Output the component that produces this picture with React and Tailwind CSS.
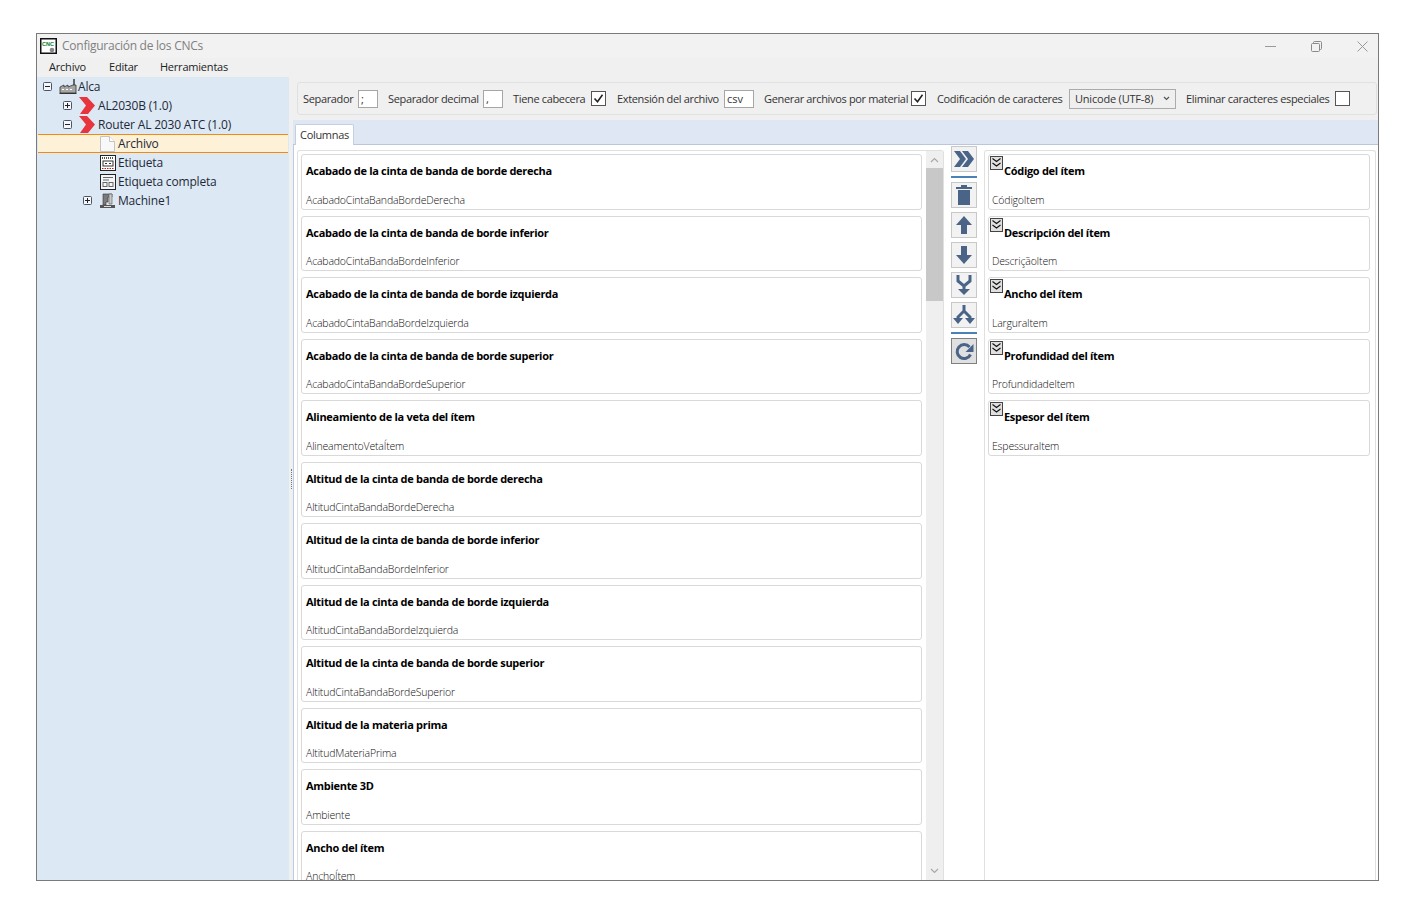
const font = { fontFamily: '"Open Sans", "Noto Sans", sans-serif' };

const columns = [
  ["Acabado de la cinta de banda de borde derecha", "AcabadoCintaBandaBordeDerecha"],
  ["Acabado de la cinta de banda de borde inferior", "AcabadoCintaBandaBordeInferior"],
  ["Acabado de la cinta de banda de borde izquierda", "AcabadoCintaBandaBordeIzquierda"],
  ["Acabado de la cinta de banda de borde superior", "AcabadoCintaBandaBordeSuperior"],
  ["Alineamiento de la veta del ítem", "AlineamentoVetaÍtem"],
  ["Altitud de la cinta de banda de borde derecha", "AltitudCintaBandaBordeDerecha"],
  ["Altitud de la cinta de banda de borde inferior", "AltitudCintaBandaBordeInferior"],
  ["Altitud de la cinta de banda de borde izquierda", "AltitudCintaBandaBordeIzquierda"],
  ["Altitud de la cinta de banda de borde superior", "AltitudCintaBandaBordeSuperior"],
  ["Altitud de la materia prima", "AltitudMateriaPrima"],
  ["Ambiente 3D", "Ambiente"],
  ["Ancho del ítem", "AnchoÍtem"],
];

const selected = [
  ["Código del ítem", "CódigoItem"],
  ["Descripción del ítem", "DescriçãoItem"],
  ["Ancho del ítem", "LarguraItem"],
  ["Profundidad del ítem", "ProfundidadeItem"],
  ["Espesor del ítem", "EspessuraItem"],
];

const ExpandBox = ({ open }) => (
  <svg width="9" height="9" viewBox="0 0 9 9" className="shrink-0">
    <rect x="0.5" y="0.5" width="8" height="8" rx="1" fill="#f4f7fb" stroke="#4a5568" />
    <path d={open ? "M2 4.5h5" : "M2 4.5h5M4.5 2v5"} stroke="#222" />
  </svg>
);

const Factory = () => (
  <svg width="18" height="16" viewBox="0 0 18 16">
    <path d="M14 0h2v8h-2z" fill="#666" />
    <path d="M1 14V8l4-2v2l4-2v2l5-2 3 0v8z" fill="#a6a6a6" stroke="#333" strokeWidth="0.8" />
    <path d="M3 10.5h2M7 10.5h2M11 10.5h2" stroke="#fff" />
    <path d="M0.5 14.5h17" stroke="#333" />
  </svg>
);

const RedChevron = () => (
  <svg width="16" height="17" viewBox="0 0 16 17">
    <path d="M0 0h8l8 8.5L9 17H1l6-8.5z" fill="#e8343c" />
  </svg>
);

const DocIcon = () => (
  <svg width="15" height="16" viewBox="0 0 15 16">
    <path d="M0.5 0.5h9l5 5v10h-14z" fill="#f8f8f8" stroke="#c4c4c4" />
    <path d="M9.5 0.5v5h5" fill="#fff" stroke="#c4c4c4" />
  </svg>
);

const LabelIcon = () => (
  <svg width="16" height="16" viewBox="0 0 16 16">
    <rect x="0.5" y="0.5" width="15" height="15" fill="#fff" stroke="#222" />
    <path d="M2 3h12" stroke="#555" strokeWidth="2" strokeDasharray="1 1" />
    <rect x="3" y="6" width="10" height="5" fill="#fff" stroke="#333" />
    <path d="M5 8.5h2M9 8.5h2" stroke="#333" />
    <path d="M2 13.5h12" stroke="#d01818" strokeDasharray="1.5 1" />
  </svg>
);

const FullLabelIcon = () => (
  <svg width="16" height="16" viewBox="0 0 16 16">
    <rect x="0.5" y="0.5" width="15" height="15" fill="#f4f6f8" stroke="#222" />
    <path d="M3 3.5h10M3 6h6" stroke="#666" />
    <rect x="3" y="8.5" width="4" height="4" fill="none" stroke="#666" />
    <rect x="9" y="8.5" width="4" height="4" fill="none" stroke="#666" />
  </svg>
);

const MachineIcon = () => (
  <svg width="15" height="16" viewBox="0 0 15 16">
    <path d="M3 1h9v3H8v5H6v3H3z" fill="#7b7b7b" stroke="#333" strokeWidth="0.6" />
    <path d="M9 1h3v10H9z" fill="#c9c9c9" stroke="#555" strokeWidth="0.6" />
    <path d="M0 12h15v3H0z" fill="#555" />
    <path d="M4 13.5h7" stroke="#ddd" />
  </svg>
);

const TreeRow = ({ indent, box, icon, label, active }) => (
  <div
    className={`flex h-[19px] items-center ${indent} ${
      active ? "border-y border-[#f08a10] bg-[#fdf1d8]" : ""
    }`}
  >
    {box}
    {icon}
    <span className="text-[12px] leading-none tracking-[-0.18px] text-[#1e2a38]">{label}</span>
  </div>
);

const Tree = () => (
  <div className="w-[252px] shrink-0 bg-[#dde8f5]">
    <TreeRow
      indent="pl-[6px]"
      box={<ExpandBox open />}
      icon={<span className="ml-[7px] mr-[1px] flex"><Factory /></span>}
      label="Alca"
    />
    <TreeRow
      indent="pl-[26px]"
      box={<ExpandBox />}
      icon={<span className="ml-[7px] mr-[3px] flex"><RedChevron /></span>}
      label="AL2030B (1.0)"
    />
    <TreeRow
      indent="pl-[26px]"
      box={<ExpandBox open />}
      icon={<span className="ml-[7px] mr-[3px] flex"><RedChevron /></span>}
      label="Router AL 2030 ATC (1.0)"
    />
    <TreeRow
      indent="ml-px mr-px pl-[62px]"
      icon={<span className="mr-[3px] flex"><DocIcon /></span>}
      label="Archivo"
      active
    />
    <TreeRow
      indent="pl-[63px]"
      icon={<span className="mr-[2px] flex"><LabelIcon /></span>}
      label="Etiqueta"
    />
    <TreeRow
      indent="pl-[63px]"
      icon={<span className="mr-[2px] flex"><FullLabelIcon /></span>}
      label="Etiqueta completa"
    />
    <TreeRow
      indent="pl-[46px]"
      box={<ExpandBox />}
      icon={<span className="ml-[8px] mr-[3px] flex"><MachineIcon /></span>}
      label="Machine1"
    />
  </div>
);

const Field = ({ value, width }) => (
  <span
    className={`ml-[5px] flex h-[18px] ${width} items-center border border-[#a6a6a6] bg-white pl-[2px] text-[11px] leading-none text-[#333]`}
  >
    {value}
  </span>
);

const Check = ({ checked }) => (
  <svg width="15" height="15" viewBox="0 0 15 15" className="ml-[5px] shrink-0">
    <rect x="0.5" y="0.5" width="14" height="14" fill="#fff" stroke="#555" />
    {checked && <path d="M3.5 7.5l3 3.2 5-7" fill="none" stroke="#222" strokeWidth="1.6" />}
  </svg>
);

const Label = ({ children, width, className = "" }) => (
  <span className={`${width} ${className} whitespace-nowrap text-[11px] leading-none tracking-[-0.34px] text-[#333]`}>
    {children}
  </span>
);

const Toolbar = () => (
  <div className="mt-[5px] mr-px ml-[4px] flex h-[33px] items-center rounded-[3px] border border-[#e0e0e0] bg-[#f0f0f0] pl-[5px]">
    <Label width="w-[50px]">Separador</Label>
    <Field value=";" width="w-[20px]" />
    <Label width="w-[90px]" className="ml-[10px]">Separador decimal</Label>
    <Field value="," width="w-[20px]" />
    <Label width="w-[73px]" className="ml-[10px]">Tiene cabecera</Label>
    <Check checked />
    <Label width="w-[102px]" className="ml-[11px]">Extensión del archivo</Label>
    <Field value="csv" width="w-[30px]" />
    <Label width="w-[142px]" className="ml-[10px]">Generar archivos por material</Label>
    <Check checked />
    <Label width="w-[127px]" className="ml-[11px]">Codificación de caracteres</Label>
    <div className="ml-[5px] flex h-[20px] w-[107px] items-center justify-between border border-[#ababab] bg-[#efefef] pl-[5px] pr-[5px]">
      <span className="whitespace-nowrap text-[11px] leading-none tracking-[-0.2px] text-[#333]">Unicode (UTF-8)</span>
      <svg width="7" height="5" viewBox="0 0 7 5"><path d="M1 1l2.5 2.5L6 1" fill="none" stroke="#555" strokeWidth="1.2" /></svg>
    </div>
    <Label width="w-[144px]" className="ml-[10px]">Eliminar caracteres especiales</Label>
    <Check />
  </div>
);

const CollapseBox = () => (
  <svg width="13" height="14" viewBox="0 0 13 14" className="mt-px ml-px shrink-0">
    <rect x="0.5" y="0.5" width="12" height="13" fill="#e0e0e0" stroke="#444" />
    <path d="M2.5 2.5l4 3 4-3M2.5 7l4 3 4-3" fill="none" stroke="#111" strokeWidth="1.1" />
  </svg>
);

const ColumnRow = ({ title, name, collapsible }) => (
  <div className="flex h-[55.5px] shrink-0 flex-col rounded-[3px] border border-[#d9d9d9] bg-white">
    {collapsible ? (
      <div className="flex">
        <CollapseBox />
        <span className="mt-[10px] ml-px text-[11px] leading-[12px] font-bold tracking-[-0.3px] text-black">{title}</span>
      </div>
    ) : (
      <span className="mt-[10px] ml-[4px] text-[11px] leading-[12px] font-bold tracking-[-0.3px] text-black">{title}</span>
    )}
    <span
      className={`mt-auto mb-[3px] text-[10.5px] leading-[12px] font-light tracking-[-0.18px] text-[#111] ${
        collapsible ? "ml-[3px]" : "ml-[4px]"
      }`}
    >
      {name}
    </span>
  </div>
);

const Scrollbar = () => (
  <div className="flex w-[17px] shrink-0 flex-col bg-[#efefef]">
    <div className="flex h-[17px] shrink-0 items-center justify-center">
      <svg width="9" height="6" viewBox="0 0 9 6"><path d="M1 5l3.5-3.5L8 5" fill="none" stroke="#a8a8a8" strokeWidth="1.2" /></svg>
    </div>
    <div className="h-[133px] shrink-0 bg-[#c8c8c8]" />
    <div className="mt-auto flex h-[17px] shrink-0 items-center justify-center pb-[2px]">
      <svg width="9" height="6" viewBox="0 0 9 6"><path d="M1 1l3.5 3.5L8 1" fill="none" stroke="#a8a8a8" strokeWidth="1.2" /></svg>
    </div>
  </div>
);

const ToolButton = ({ children, active }) => (
  <div
    className={`flex h-[26px] w-[26px] items-center justify-center border ${
      active ? "border-[#808080] bg-[#e0e0e0]" : "border-[#c8c8c8] bg-[#f2f2f2]"
    }`}
  >
    <svg width="22" height="22" viewBox="0 0 22 22" fill="#4a6488">
      {children}
    </svg>
  </div>
);

const Separator = () => <div className="h-[2px] w-[26px] shrink-0 bg-[#4a82b4]" />;

const ToolColumn = () => (
  <div className="ml-[7px] flex w-[26px] shrink-0 flex-col">
    <ToolButton>
      <path d="M1 3h6l6 8-6 8H1l6-8zM9 3h6l6 8-6 8H9l6-8z" />
    </ToolButton>
    <div className="my-[4px]"><Separator /></div>
    <ToolButton>
      <path d="M8 1h6v2h5v2H3V3h5zM5 6h12v15H5z" />
    </ToolButton>
    <div className="mt-[4px]">
      <ToolButton>
        <path d="M11 2l8 9h-5v9H8v-9H3z" />
      </ToolButton>
    </div>
    <div className="mt-[4px]">
      <ToolButton>
        <path d="M8 2h6v9h5l-8 9-8-9h5z" />
      </ToolButton>
    </div>
    <div className="mt-[4px]">
      <ToolButton>
        <path d="M5 1v6l6 5 6-5V1M11 12v4" fill="none" stroke="#4a6488" strokeWidth="3" />
        <path d="M5 15h12l-6 6z" />
      </ToolButton>
    </div>
    <div className="mt-[4px]">
      <ToolButton>
        <path d="M11 1v6l-6 6v2M11 7l6 6v2" fill="none" stroke="#4a6488" strokeWidth="3" />
        <path d="M0 14h10l-5 6zM12 14h10l-5 6z" />
      </ToolButton>
    </div>
    <div className="my-[4px]"><Separator /></div>
    <ToolButton active>
      <path d="M17.5 14.5a7 7 0 1 1-1-7.5" fill="none" stroke="#4a6488" strokeWidth="3" />
      <path d="M20.5 4v8h-8z" />
    </ToolButton>
  </div>
);

const ColumnsPane = () => (
  <div className="flex min-h-0 flex-1 border-l border-[#b9cde6] bg-white pt-[5px] pr-[2px] pl-[3px]">
    <div className="flex w-[647px] shrink-0 rounded-t-[3px] border border-b-0 border-[#e0e0e0]">
      <div className="flex min-w-0 flex-1 flex-col gap-[6px] overflow-hidden pt-[3px] pr-[4px] pl-[3px]">
        {columns.map(([title, name]) => (
          <ColumnRow key={name} title={title} name={name} />
        ))}
      </div>
      <Scrollbar />
    </div>
    <div className="-mt-[4px]"><ToolColumn /></div>
    <div className="ml-[7px] flex min-w-0 flex-1 flex-col gap-[6px] overflow-hidden rounded-t-[3px] border border-b-0 border-[#e0e0e0] pt-[3px] pr-[5px] pl-[3px]">
      {selected.map(([title, name]) => (
        <ColumnRow key={name} title={title} name={name} collapsible />
      ))}
    </div>
  </div>
);

const WindowControls = () => (
  <div className="flex items-center gap-[35px] pr-[10px]">
    <svg width="11" height="11" viewBox="0 0 11 11"><path d="M0 5.5h11" stroke="#9a9a9a" /></svg>
    <svg width="11" height="11" viewBox="0 0 11 11" fill="none" stroke="#8a8a8a"><rect x="0.5" y="2.5" width="8" height="8" rx="1" /><path d="M2.5 2.5v-1a1 1 0 0 1 1-1h6a1 1 0 0 1 1 1v6a1 1 0 0 1-1 1h-1" /></svg>
    <svg width="11" height="11" viewBox="0 0 11 11"><path d="M0.5 0.5l10 10M10.5 0.5l-10 10" stroke="#9a9a9a" /></svg>
  </div>
);

const AppIcon = () => (
  <svg width="17" height="16" viewBox="0 0 17 16">
    <rect x="0.75" y="0.75" width="15.5" height="14.5" fill="#fff" stroke="#111" strokeWidth="1.5" />
    <circle cx="12" cy="12" r="2.3" fill="#888" />
    <text x="2" y="8" fontSize="5.5" fontWeight="700" fill="#0a7a2a" style={{ fontFamily: '"Liberation Sans", sans-serif' }}>CNC</text>
  </svg>
);

export default function App() {
  return (
    <div className="h-[911px] w-[1417px] overflow-hidden bg-white pt-[33px] pl-[36px]" style={font}>
      <div className="flex h-[848px] w-[1343px] flex-col border border-[#7a7a7a] bg-[#f0f0f0]">
        <div className="flex h-[24px] shrink-0 items-center justify-between bg-[#f2f2f2] pl-[3px]">
          <div className="flex items-center">
            <AppIcon />
            <span className="ml-[5px] text-[12px] leading-none tracking-[-0.25px] text-[#808080]">Configuración de los CNCs</span>
          </div>
          <WindowControls />
        </div>
        <div className="flex h-[19px] shrink-0 items-center pb-[2px] pl-[12px] text-[11px] leading-none tracking-[-0.2px] text-[#222]">
          <span>Archivo</span>
          <span className="ml-[23px]">Editar</span>
          <span className="ml-[22px]">Herramientas</span>
        </div>
        <div className="flex min-h-0 flex-1">
          <Tree />
          <div className="flex w-[4px] shrink-0 items-center justify-center">
            <div className="h-[20px] w-px border-l border-dotted border-[#777]" />
          </div>
          <div className="flex min-w-0 flex-1 flex-col">
            <Toolbar />
            <div className="mt-[5px] flex h-[25px] shrink-0 items-end border-b border-[#b8c7dd] bg-[#dee7f3] pl-[2px]">
              <div className="-mb-px flex h-[21px] w-[59px] items-center rounded-t-[2px] border border-b-0 border-[#c4d0e0] bg-white pb-[2px] pl-[4px] text-[11px] leading-none tracking-[-0.3px] text-[#333]">
                Columnas
              </div>
            </div>
            <ColumnsPane />
          </div>
        </div>
      </div>
    </div>
  );
}
